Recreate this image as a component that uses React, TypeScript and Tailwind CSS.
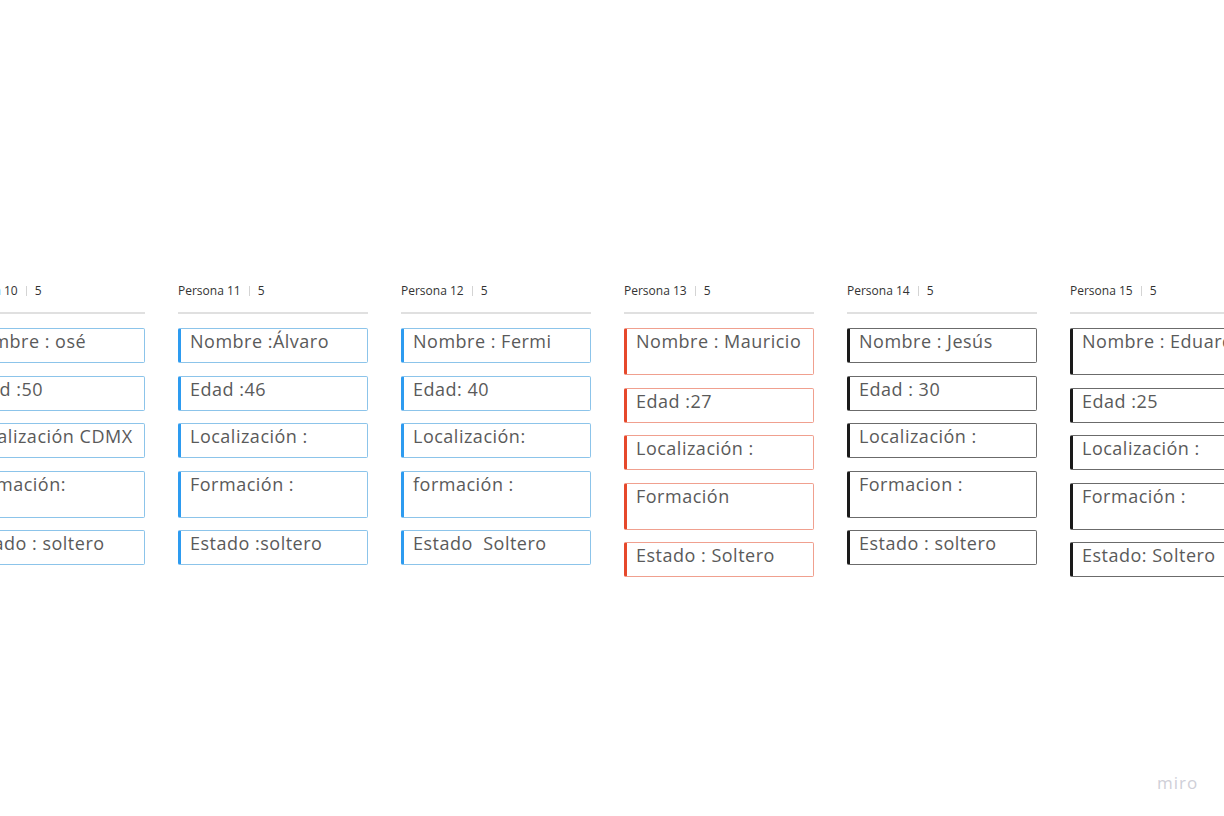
import React from 'react';

type Tone = 'blue' | 'red' | 'dark';

interface Column {
    title: string;
    count: number;
    tone: Tone;
    cards: { text: string; tall?: boolean }[];
}

const COLUMNS: Column[] = [
    {
        title: 'Persona 10',
        count: 5,
        tone: 'blue',
        cards: [
            { text: 'Nombre : osé' },
            { text: 'Edad :50' },
            { text: 'Localización CDMX' },
            { text: 'Formación:', tall: true },
            { text: 'Estado : soltero' },
        ],
    },
    {
        title: 'Persona 11',
        count: 5,
        tone: 'blue',
        cards: [
            { text: 'Nombre :Álvaro' },
            { text: 'Edad :46' },
            { text: 'Localización :' },
            { text: 'Formación :', tall: true },
            { text: 'Estado :soltero' },
        ],
    },
    {
        title: 'Persona 12',
        count: 5,
        tone: 'blue',
        cards: [
            { text: 'Nombre : Fermi' },
            { text: 'Edad: 40' },
            { text: 'Localización:' },
            { text: 'formación :', tall: true },
            { text: 'Estado  Soltero' },
        ],
    },
    {
        title: 'Persona 13',
        count: 5,
        tone: 'red',
        cards: [
            { text: 'Nombre : Mauricio', tall: true },
            { text: 'Edad :27' },
            { text: 'Localización :' },
            { text: 'Formación', tall: true },
            { text: 'Estado : Soltero' },
        ],
    },
    {
        title: 'Persona 14',
        count: 5,
        tone: 'dark',
        cards: [
            { text: 'Nombre : Jesús' },
            { text: 'Edad : 30' },
            { text: 'Localización :' },
            { text: 'Formacion :', tall: true },
            { text: 'Estado : soltero' },
        ],
    },
    {
        title: 'Persona 15',
        count: 5,
        tone: 'dark',
        cards: [
            { text: 'Nombre : Eduardo', tall: true },
            { text: 'Edad :25' },
            { text: 'Localización :' },
            { text: 'Formación :', tall: true },
            { text: 'Estado: Soltero' },
        ],
    },
];

const TONE_CLASSES: Record<Tone, string> = {
    blue: 'border-[#8cc4ea] border-l-[#2d9bf0]',
    red: 'border-[#f0a08f] border-l-[#e6482b]',
    dark: 'border-[#6b6b6b] border-l-[#1a1a1a]',
};

const Card: React.FC<{ text: string; tall?: boolean; tone: Tone }> = ({ text, tall, tone }) => (
    <div
        className={`w-[190px] shrink-0 rounded-[2px] border border-l-[3px] bg-white pl-[9px] pt-[0px] text-[18px] tracking-[0.5px] leading-[24px] whitespace-pre overflow-hidden text-[#5a5a5a] ${TONE_CLASSES[tone]} ${tall ? 'h-[47px]' : 'h-[35px]'}`}
    >
        {text}
    </div>
);

export default function App() {
    return (
        <div
            className="relative w-[1224px] h-[816px] overflow-hidden bg-white"
            style={{ fontFamily: '"Open Sans", "Noto Sans", sans-serif' }}
        >
            <div className="flex gap-[33px] ml-[-45px] pt-[283px]">
                {COLUMNS.map((col) => (
                    <div key={col.title} className="w-[190px] shrink-0 flex flex-col">
                        <div className="flex items-center h-[16px] text-[12px] text-[#333]">
                            <span>{col.title}</span>
                            <span className="mx-[8px] h-[10px] w-px bg-[#d4d4d4]" />
                            <span>{col.count}</span>
                        </div>
                        <div className="mt-[13px] h-[2px] bg-[#e0e0e0]" />
                        <div className="mt-[14px] flex flex-col gap-[12.5px]">
                            {col.cards.map((c, i) => (
                                <Card key={i} text={c.text} tall={c.tall} tone={col.tone} />
                            ))}
                        </div>
                    </div>
                ))}
            </div>
            <div className="absolute left-[1157px] top-[770px] text-[17px] font-medium tracking-[1px] text-[#cfcfd8]">
                miro
            </div>
        </div>
    );
}
